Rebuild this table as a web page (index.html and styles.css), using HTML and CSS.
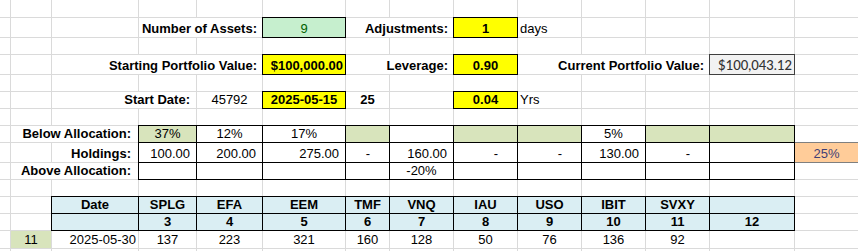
FILE: index.html
```html
<!DOCTYPE html>
<html>
<head>
<meta charset="utf-8">
<link rel="stylesheet" href="styles.css">
</head>
<body>
<div class="sheet">
  <!-- row 1 -->
  <div></div><div></div><div></div><div></div><div></div><div></div><div></div><div></div><div></div><div></div><div></div><div></div><div></div><div></div>
  <!-- row 2 -->
  <div></div><div></div><div></div>
  <div class="s2 lab b">Number of Assets:</div>
  <div class="box good ctr">9</div>
  <div class="s2 lab b">Adjustments:</div>
  <div class="box yel ctr b">1</div>
  <div>days</div>
  <div></div><div></div><div></div><div></div>
  <!-- row 3 -->
  <div></div><div></div><div></div><div></div><div></div><div></div><div></div><div></div><div></div><div></div><div></div><div></div><div></div><div></div>
  <!-- row 4 -->
  <div></div><div></div>
  <div class="s3 lab b">Starting Portfolio Value:</div>
  <div class="box yel rt b">$100,000.00</div>
  <div class="s2 lab b">Leverage:</div>
  <div class="box yel ctr b">0.90</div>
  <div class="s3 lab b">Current Portfolio Value:</div>
  <div class="box out rt">$100,043.12</div>
  <div></div>
  <!-- row 5 -->
  <div></div><div></div><div></div><div></div><div></div><div></div><div></div><div></div><div></div><div></div><div></div><div></div><div></div><div></div>
  <!-- row 6 -->
  <div></div><div></div>
  <div class="s2 lab lab-d b">Start Date:</div>
  <div class="ctr">45792</div>
  <div class="box yel ctr b">2025-05-15</div>
  <div class="ctr b">25</div>
  <div></div>
  <div class="box yel ctr b">0.04</div>
  <div>Yrs</div>
  <div></div><div></div><div></div><div></div>
  <!-- row 7 -->
  <div></div><div></div><div></div><div></div><div></div><div></div><div></div><div></div><div></div><div></div><div></div><div></div><div></div><div></div>
  <!-- row 8 -->
  <div></div>
  <div class="s2 lab lab-c b">Below Allocation:</div>
  <div class="box alloc ctr">37%</div>
  <div class="box ctr">12%</div>
  <div class="box ctr">17%</div>
  <div class="box alloc"></div>
  <div class="box"></div>
  <div class="box alloc"></div>
  <div class="box alloc"></div>
  <div class="box ctr">5%</div>
  <div class="box alloc"></div>
  <div class="box alloc"></div>
  <div></div>
  <!-- row 9 -->
  <div></div><div></div>
  <div class="lab lab-c b">Holdings:</div>
  <div class="box num">100.00</div>
  <div class="box num">200.00</div>
  <div class="box num">275.00</div>
  <div class="box dash">-</div>
  <div class="box num">160.00</div>
  <div class="box dash">-</div>
  <div class="box dash">-</div>
  <div class="box num">130.00</div>
  <div class="box dash">-</div>
  <div class="box"></div>
  <div class="input ctr">25%</div>
  <!-- row 10 -->
  <div></div>
  <div class="s2 lab lab-c b">Above Allocation:</div>
  <div class="box"></div>
  <div class="box"></div>
  <div class="box"></div>
  <div class="box"></div>
  <div class="box ctr">-20%</div>
  <div class="box"></div>
  <div class="box"></div>
  <div class="box"></div>
  <div class="box"></div>
  <div class="box"></div>
  <div></div>
  <!-- row 11 -->
  <div></div><div></div><div></div><div></div><div></div><div></div><div></div><div></div><div></div><div></div><div></div><div></div><div></div><div></div>
  <!-- row 12 -->
  <div></div><div></div>
  <div class="box hd">Date</div>
  <div class="box hd">SPLG</div>
  <div class="box hd">EFA</div>
  <div class="box hd">EEM</div>
  <div class="box hd">TMF</div>
  <div class="box hd">VNQ</div>
  <div class="box hd">IAU</div>
  <div class="box hd">USO</div>
  <div class="box hd">IBIT</div>
  <div class="box hd">SVXY</div>
  <div class="box hd"></div>
  <div></div>
  <!-- row 13 -->
  <div></div><div></div>
  <div class="box hd"></div>
  <div class="box hd">3</div>
  <div class="box hd">4</div>
  <div class="box hd">5</div>
  <div class="box hd">6</div>
  <div class="box hd">7</div>
  <div class="box hd">8</div>
  <div class="box hd">9</div>
  <div class="box hd">10</div>
  <div class="box hd">11</div>
  <div class="box hd">12</div>
  <div></div>
  <!-- row 14 -->
  <div></div>
  <div class="alloc ctr">11</div>
  <div class="rt">2025-05-30</div>
  <div class="ctr">137</div>
  <div class="ctr">223</div>
  <div class="ctr">321</div>
  <div class="ctr">160</div>
  <div class="ctr">128</div>
  <div class="ctr">50</div>
  <div class="ctr">76</div>
  <div class="ctr">136</div>
  <div class="ctr">92</div>
  <div></div><div></div>
  <!-- row 15 -->
  <div></div><div></div><div></div><div></div><div></div><div></div><div></div><div></div><div></div><div></div><div></div><div></div><div></div><div></div>
</div>
</body>
</html>
```

FILE: styles.css
```css
* { box-sizing: border-box; }
html, body { margin: 0; padding: 0; background: #fff; }
body {
  font-family: "Liberation Sans", Arial, sans-serif;
  font-size: 13px;
  color: #000;
  overflow: hidden;
}
.sheet {
  display: grid;
  grid-template-columns: 11px 41px 87px 58px 66px 83px 44px 64px 64px 64px 64px 64px 85px 64px;
  grid-template-rows: 18px 20px 17px 20px 17px 17px 17px 17px 20px 17px 17px 17px 17px 18px 3px;
  width: 858px;
  height: 251px;
  overflow: hidden;
}
.sheet > div {
  border-right: 1px solid #dadada;
  border-bottom: 1px solid #dadada;
  display: flex;
  align-items: flex-end;
  justify-content: flex-start;
  padding: 0 2px 1px 2px;
  white-space: nowrap;
  line-height: 15px;
}
.s2 { grid-column: span 2; }
.s3 { grid-column: span 3; }
.b { font-weight: bold; }
.sheet > .ctr { justify-content: center; }
.sheet > .rt { justify-content: flex-end; }
.sheet > .lab { justify-content: flex-end; padding-right: 5px; }
.sheet > .lab-d { padding-right: 6px; }
.sheet > .lab-c { padding-right: 7px; }
.sheet > .num { justify-content: flex-end; padding-right: 6px; }
.sheet > .dash { justify-content: flex-end; padding-right: 19px; }

.sheet > .box {
  border-right-color: #000;
  border-bottom-color: #000;
  box-shadow: -1px -1px 0 #000, 0 -1px 0 #000, -1px 0 0 #000;
}
.good { background: #c6efce; color: #006100; }
.yel { background: #ffff00; }
.alloc { background: #d8e4bc; }
.hd { background: #daeef3; font-weight: bold; justify-content: center !important; }
.sheet > .out {
  background: #f2f2f2;
  color: #333;
  border-right-color: #3f3f3f;
  border-bottom-color: #3f3f3f;
  box-shadow: -1px -1px 0 #3f3f3f, 0 -1px 0 #3f3f3f, -1px 0 0 #3f3f3f;
  font-family: Lato, "Liberation Sans", sans-serif;
  font-size: 13px;
  font-weight: 500;
  padding-right: 2px;
}
.sheet > .input {
  background: #ffcc99;
  color: #3f3f76;
  border-bottom-color: #7f7f7f;
  box-shadow: 0 -1px 0 #7f7f7f;
}
```
